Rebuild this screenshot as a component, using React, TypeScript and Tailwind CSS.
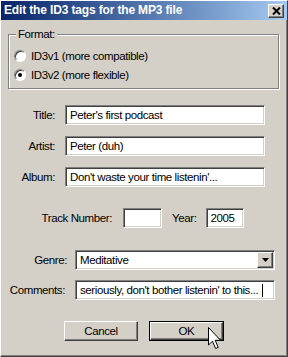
export default function App() {
  const font = "font-['Liberation_Sans',Arial,sans-serif]";
  const sunken =
    "bg-white border border-[#808080] border-b-white border-r-white shadow-[inset_1px_1px_0_#404040,inset_-1px_-1px_0_#d4d0c8]";
  const raised =
    "bg-[#d4d0c8] border border-white border-b-[#404040] border-r-[#404040] shadow-[inset_-1px_-1px_0_#808080]";

  return (
    <div className={`w-[288px] h-[357px] bg-[#d4d0c8] text-black text-[11.5px] tracking-[-0.4px] leading-[14px] whitespace-nowrap ${font} border border-white border-b-[#404040] border-r-[#404040] shadow-[inset_-1px_-1px_0_#808080] flex flex-col relative`}>
      {/* Title bar */}
      <div className="h-[19px] bg-gradient-to-r from-[#0a246a] to-[#a6caf0] flex items-center pl-[3px] pr-[3px]">
        <span className="text-white font-bold text-[12px] tracking-[-0.15px] leading-[15px]">
          Edit the ID3 tags for the MP3 file
        </span>
        <div className={`ml-auto w-[16px] h-[14px] ${raised} flex items-center justify-center`}>
          <svg width="9" height="8" viewBox="0 0 9 8">
            <path d="M1 0.5 L8 7.5 M8 0.5 L1 7.5" stroke="#000" strokeWidth="2" />
          </svg>
        </div>
      </div>

      {/* Format group */}
      <div className="mt-[14px] ml-[7px] w-[271px] h-[55px] relative border border-[#808080] shadow-[1px_1px_0_#fff,inset_1px_1px_0_#fff] pt-[11px] pl-[5px]">
        <span className="absolute -top-[8px] left-[7px] px-[2px] bg-[#d4d0c8]">Format:</span>
        <div className="flex items-center h-[19px] gap-[5px]">
          <div className="w-[12px] h-[12px] rounded-full bg-white border border-[#808080] border-b-white border-r-white shadow-[inset_1px_1px_0_#404040]" />
          <span>ID3v1 (more compatible)</span>
        </div>
        <div className="flex items-center h-[19px] gap-[5px]">
          <div className="w-[12px] h-[12px] rounded-full bg-white border border-[#808080] border-b-white border-r-white shadow-[inset_1px_1px_0_#404040] flex items-center justify-center">
            <div className="w-[4px] h-[4px] rounded-full bg-black" />
          </div>
          <span>ID3v2 (more flexible)</span>
        </div>
      </div>

      {/* Text fields */}
      <div className="mt-[16px] flex flex-col gap-[11px]">
        <div className="flex items-center h-[20px]">
          <span className="w-[54px] text-right">Title:</span>
          <div className={`ml-[10px] w-[200px] h-[20px] ${sunken} pl-[4px] flex items-center`}>Peter's first podcast</div>
        </div>
        <div className="flex items-center h-[20px]">
          <span className="w-[54px] text-right">Artist:</span>
          <div className={`ml-[10px] w-[200px] h-[20px] ${sunken} pl-[4px] flex items-center`}>Peter (duh)</div>
        </div>
        <div className="flex items-center h-[20px]">
          <span className="w-[54px] text-right">Album:</span>
          <div className={`ml-[10px] w-[200px] h-[20px] ${sunken} pl-[4px] flex items-center`}>Don't waste your time listenin'...</div>
        </div>
      </div>

      {/* Track / Year */}
      <div className="mt-[21px] flex items-center h-[20px]">
        <span className="w-[111px] text-right">Track Number:</span>
        <div className={`ml-[11px] w-[39px] h-[20px] ${sunken}`} />
        <span className="ml-[10px]">Year:</span>
        <div className={`ml-[10px] w-[38px] h-[20px] ${sunken} pl-[3px] flex items-center`}>2005</div>
      </div>

      {/* Genre */}
      <div className="mt-[22px] flex items-center h-[20px]">
        <span className="w-[66px] text-right">Genre:</span>
        <div className={`ml-[8px] w-[200px] h-[20px] ${sunken} pl-[4px] pr-[1px] flex items-center`}>
          <span>Meditative</span>
          <div className={`ml-auto w-[16px] h-[16px] ${raised} flex items-center justify-center`}>
            <svg width="7" height="4" viewBox="0 0 7 4">
              <path d="M0 0 H7 L3.5 4 Z" fill="#000" />
            </svg>
          </div>
        </div>
      </div>

      {/* Comments */}
      <div className="mt-[10px] flex items-center h-[20px]">
        <span className="w-[64px] text-right">Comments:</span>
        <div className={`ml-[10px] w-[200px] h-[20px] ${sunken} pl-[4px] flex items-center`}>
          <span>seriously, don't bother listenin' to this...</span>
          <span className="ml-[4px] w-px h-[13px] bg-black" />
        </div>
      </div>

      {/* Buttons */}
      <div className="mt-[21px] flex items-center">
        <div className={`ml-[63px] w-[74px] h-[20px] ${raised} flex items-center justify-center`}>Cancel</div>
        <div className="ml-[11px] w-[75px] h-[20px] border border-black">
          <div className={`w-full h-full ${raised} flex items-center justify-center`}>OK</div>
        </div>
      </div>

      {/* Mouse cursor */}
      <svg className="absolute left-[207px] top-[326px]" width="14" height="24" viewBox="0 0 14 24">
        <path
          d="M0.5 0.5 L0.5 18 L4.5 14.2 L7.6 21.5 L10.2 20.4 L7.2 13.3 L12.6 13.3 Z"
          fill="#fff"
          stroke="#000"
          strokeWidth="1"
          strokeLinejoin="miter"
        />
      </svg>
    </div>
  );
}
